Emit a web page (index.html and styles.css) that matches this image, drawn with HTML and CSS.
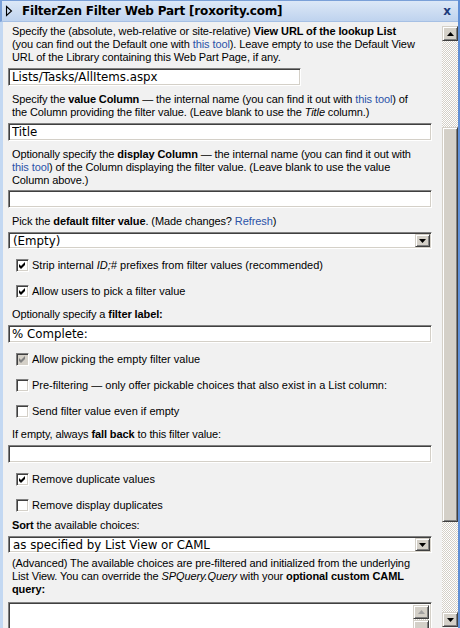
FILE: index.html
```html
<!DOCTYPE html>
<html>
<head>
<meta charset="utf-8">
<link rel="stylesheet" href="styles.css">
</head>
<body>
<div class="frame">
  <div class="titlebar">
    <svg class="expand" width="8" height="12" viewBox="0 0 8 12"><path d="M1.5 1.5 L6.5 6 L1.5 10.5 Z" fill="none" stroke="#000" stroke-width="1.1"/></svg>
    <span class="title">FilterZen Filter Web Part [roxority.com]</span>
    <span class="close">x</span>
  </div>
  <div class="pane">
    <div class="content">
      <p class="desc first">Specify the (absolute, web-relative or site-relative) <b>View URL of the lookup List</b><br>(you can find out the Default one with <a href="#">this tool</a>). Leave empty to use the Default View<br>URL of the Library containing this Web Part Page, if any.</p>
      <input class="field short" type="text" value="Lists/Tasks/AllItems.aspx">
      <p class="desc">Specify the <b>value Column</b> — the internal name (you can find it out with <a href="#">this tool</a>) of<br>the Column providing the filter value. (Leave blank to use the <i>Title</i> column.)</p>
      <input class="field" type="text" value="Title">
      <p class="desc">Optionally specify the <b>display Column</b> — the internal name (you can find it out with<br><a href="#">this tool</a>) of the Column displaying the filter value. (Leave blank to use the value<br>Column above.)</p>
      <input class="field tight" type="text" value="">
      <p class="desc">Pick the <b>default filter value</b>. (Made changes? <a href="#">Refresh</a>)</p>
      <div class="select"><span>(Empty)</span><span class="drop"><svg width="7" height="4" viewBox="0 0 7 4"><path d="M0 0 H7 L3.5 4 Z" fill="#000"/></svg></span></div>
      <div class="check after-input"><span class="cb"><svg width="11" height="11" viewBox="0 0 11 11"><path d="M2 4 L4 6 L8 2 L8 5 L4 9 L2 7 Z" fill="#000"/></svg></span><span>Strip internal <i>ID;#</i> prefixes from filter values (recommended)</span></div>
      <div class="check"><span class="cb"><svg width="11" height="11" viewBox="0 0 11 11"><path d="M2 4 L4 6 L8 2 L8 5 L4 9 L2 7 Z" fill="#000"/></svg></span><span>Allow users to pick a filter value</span></div>
      <p class="desc after-check">Optionally specify a <b>filter label:</b></p>
      <input class="field" type="text" value="% Complete:">
      <div class="check after-input"><span class="cb disabled"><svg width="11" height="11" viewBox="0 0 11 11"><path d="M2 4 L4 6 L8 2 L8 5 L4 9 L2 7 Z" fill="#808080"/></svg></span><span>Allow picking the empty filter value</span></div>
      <div class="check"><span class="cb"></span><span>Pre-filtering — only offer pickable choices that also exist in a List column:</span></div>
      <div class="check"><span class="cb"></span><span>Send filter value even if empty</span></div>
      <p class="desc after-check">If empty, always <b>fall back</b> to this filter value:</p>
      <input class="field" type="text" value="">
      <div class="check after-input"><span class="cb"><svg width="11" height="11" viewBox="0 0 11 11"><path d="M2 4 L4 6 L8 2 L8 5 L4 9 L2 7 Z" fill="#000"/></svg></span><span>Remove duplicate values</span></div>
      <div class="check"><span class="cb"></span><span>Remove display duplicates</span></div>
      <p class="desc"><b>Sort</b> the available choices:</p>
      <div class="select"><span>as specified by List View or CAML</span><span class="drop"><svg width="7" height="4" viewBox="0 0 7 4"><path d="M0 0 H7 L3.5 4 Z" fill="#000"/></svg></span></div>
      <p class="desc tight">(Advanced) The available choices are pre-filtered and initialized from the underlying<br>List View. You can override the <i>SPQuery.Query</i> with your <b>optional custom CAML<br>query:</b></p>
      <div class="memo">
        <div class="memo-sb">
          <span class="btn"><svg width="7" height="4" viewBox="0 0 7 4"><path d="M0 4 H7 L3.5 0 Z" fill="#a0a0a0"/></svg></span>
          <span class="btn"></span>
        </div>
      </div>
    </div>
    <div class="vscroll">
      <span class="btn"><svg width="7" height="4" viewBox="0 0 7 4"><path d="M0 4 H7 L3.5 0 Z" fill="#000"/></svg></span>
      <span class="track top"></span>
      <span class="thumb"></span>
      <span class="track rest"></span>
      <span class="btn"><svg width="7" height="4" viewBox="0 0 7 4"><path d="M0 0 H7 L3.5 4 Z" fill="#000"/></svg></span>
    </div>
  </div>
</div>
</body>
</html>
```
FILE: styles.css
```css
* { box-sizing: border-box; }
html, body { margin: 0; padding: 0; }
body {
  width: 460px;
  height: 628px;
  overflow: hidden;
  background: #f1f1f1;
  font-family: "Liberation Sans", Arial, sans-serif;
  font-size: 11px;
  color: #000;
}
.frame {
  height: 628px;
  display: flex;
  flex-direction: column;
  border-right: 2px solid #5f8fd6;
}
.titlebar {
  height: 22px;
  flex: none;
  display: flex;
  align-items: center;
  background: linear-gradient(#dce8f7, #bfd3ee);
  border-top: 1px solid #7aa0d8;
  border-left: 2px solid #7aa0d8;
  border-bottom: 1px solid #a6c0e4;
}
.expand { margin-left: 3px; flex: none; }
.title {
  flex: 1;
  margin-left: 9px;
  font-family: "DejaVu Sans", sans-serif;
  font-weight: bold;
  font-size: 12px;
  letter-spacing: -0.2px;
  color: #000;
}
.close {
  font-family: "DejaVu Sans", sans-serif;
  font-weight: bold;
  font-size: 12px;
  color: #1d3b7c;
  margin-right: 7px;
}
.pane {
  flex: 1;
  min-height: 0;
  display: flex;
  border-left: 3px solid #c3d8f2;
}
.content {
  flex: 1;
  min-width: 0;
  padding: 3px 10px 0 5px;
  overflow: hidden;
}
.desc {
  margin: 7px 0 0 4px;
  line-height: 13px;
  letter-spacing: -0.1px;
  white-space: nowrap;
}
.desc.first { margin-top: 0; }
.desc.after-check { margin-top: 10px; }
.desc.tight { margin-top: 4px; }
a { color: #2b53a8; text-decoration: none; }

.field {
  display: block;
  width: 100%;
  height: 18px;
  margin: 4px 0 0 0;
  padding: 0 3px;
  border: 1px solid;
  border-color: #808080 #fff #fff #808080;
  box-shadow: inset 1px 1px #404040, inset -1px -1px #d4d0c8;
  background: #fff;
  font-family: "DejaVu Sans", sans-serif;
  font-size: 11.8px;
  color: #000;
  outline: none;
}
.field.short { width: 293px; }
.field.tight { margin-top: 3px; }

.select {
  display: flex;
  align-items: center;
  height: 17px;
  margin-top: 4px;
  padding: 1px 1px 1px 4px;
  border: 1px solid;
  border-color: #808080 #fff #fff #808080;
  box-shadow: inset 1px 1px #404040, inset -1px -1px #d4d0c8;
  background: #fff;
  font-family: "DejaVu Sans", sans-serif;
  font-size: 11.8px;
}
.drop, .btn {
  display: flex;
  align-items: center;
  justify-content: center;
  flex: none;
  background: #d4d0c8;
  border: 1px solid;
  border-color: #d4d0c8 #404040 #404040 #d4d0c8;
  box-shadow: inset 1px 1px #fff, inset -1px -1px #808080;
}
.drop { margin-left: auto; width: 15px; height: 13px; }

.check {
  display: flex;
  align-items: center;
  gap: 3px;
  height: 13px;
  margin: 13px 0 0 8px;
  line-height: 13px;
  white-space: nowrap;
}
.check.after-input { margin-top: 10px; }
.cb {
  width: 13px;
  height: 13px;
  flex: none;
  display: flex;
  background: #fff;
  border: 1px solid;
  border-color: #808080 #fff #fff #808080;
  box-shadow: inset 1px 1px #404040, inset -1px -1px #d4d0c8;
}
.cb.disabled { background: #d4d0c8; }

.memo {
  display: flex;
  justify-content: flex-end;
  height: 40px;
  margin-top: 6px;
  padding: 2px;
  border: 1px solid;
  border-color: #808080 #fff #fff #808080;
  box-shadow: inset 1px 1px #404040, inset -1px -1px #d4d0c8;
  background: #fff;
}
.memo-sb {
  width: 16px;
  display: flex;
  flex-direction: column;
  gap: 1px;
  background: repeating-conic-gradient(#fff 0 25%, #d4d0c8 0 50%) 0 0 / 2px 2px;
}
.memo-sb .btn { height: 14px; }

.vscroll {
  width: 16px;
  flex: none;
  display: flex;
  flex-direction: column;
  padding: 4px 0 1px;
}
.vscroll .btn { height: 15px; }
.track {
  background: repeating-conic-gradient(#fff 0 25%, #d4d0c8 0 50%) 0 0 / 2px 2px;
}
.track.top { height: 86px; }
.track.rest { flex: 1; }
.thumb {
  height: 395px;
  background: #d4d0c8;
  border: 1px solid;
  border-color: #d4d0c8 #404040 #404040 #d4d0c8;
  box-shadow: inset 1px 1px #fff, inset -1px -1px #808080;
}
```
